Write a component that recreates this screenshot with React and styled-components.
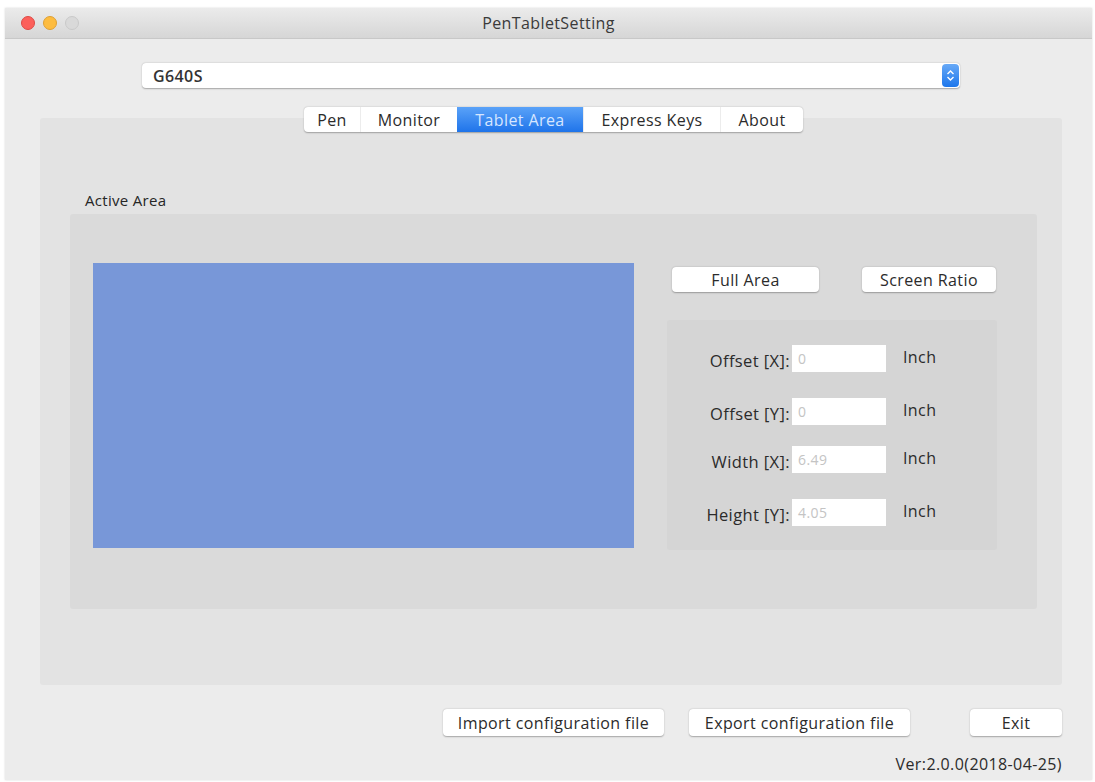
import React from 'react';
import styled, { createGlobalStyle } from 'styled-components';

const Global = createGlobalStyle`
  html, body {
    margin: 0;
    background: #ffffff;
  }
  body {
    font-family: "Open Sans", "Liberation Sans", Arial, sans-serif;
    letter-spacing: 0.4px;
    color: #2b2b2b;
  }
`;

const Window = styled.div`
  margin: 8px 3px 2px 5px;
  height: 772px;
  display: flex;
  flex-direction: column;
  background: #ececec;
  box-shadow: 0 0 2px rgba(0, 0, 0, 0.15);
`;

const TitleBar = styled.div`
  height: 30px;
  flex: 0 0 30px;
  display: flex;
  align-items: center;
  position: relative;
  background: linear-gradient(#ebebeb, #d6d6d6);
  border-bottom: 1px solid #c8c8c8;
`;

const Lights = styled.div`
  display: flex;
  gap: 8px;
  padding-left: 16px;
`;

const Light = styled.span`
  width: 14px;
  height: 14px;
  border-radius: 50%;
  background: ${p => p.color};
  border: 1px solid ${p => p.edge};
  box-sizing: border-box;
`;

const Title = styled.div`
  position: absolute;
  left: 0;
  right: 0;
  text-align: center;
  font-size: 16px;
  color: #3a3a3a;
`;

const Body = styled.div`
  flex: 1;
  display: flex;
  flex-direction: column;
  padding: 24px 0 0 35px;
`;

const Select = styled.div`
  margin-left: 102px;
  width: 818px;
  height: 25px;
  display: flex;
  align-items: center;
  justify-content: space-between;
  background: #ffffff;
  border-radius: 4px;
  box-shadow: 0 0.5px 1.5px rgba(0, 0, 0, 0.3);
  font-size: 16px;
  font-weight: 600;
  color: #333;
  padding-left: 11px;
  box-sizing: border-box;
`;

const Stepper = styled.div`
  width: 17px;
  height: 23px;
  margin-right: 1px;
  border-radius: 4px;
  background: linear-gradient(#67a9f7, #1d77ec);
  display: flex;
  align-items: center;
  justify-content: center;
`;

const Tabs = styled.div`
  display: flex;
  align-self: flex-start;
  margin: 19px 0 -14px 264px;
  height: 25px;
  background: #ffffff;
  border-radius: 4px;
  box-shadow: 0 0.5px 1.5px rgba(0, 0, 0, 0.3);
  position: relative;
  z-index: 1;
`;

const Tab = styled.div`
  width: ${p => p.w}px;
  display: flex;
  align-items: center;
  justify-content: center;
  font-size: 16px;
  color: ${p => (p.active ? '#d6e6ff' : '#2b2b2b')};
  background: ${p => (p.active ? 'linear-gradient(#5aa2f8, #1f74ea)' : 'transparent')};
  border-left: ${p => (p.first || p.active ? 'none' : '1px solid #ececec')};
  box-sizing: border-box;
`;

const Panel = styled.div`
  width: 1022px;
  height: 567px;
  background: #e3e3e3;
  border-radius: 3px;
  padding: 72px 25px 0 30px;
  box-sizing: border-box;
`;

const GroupLabel = styled.div`
  font-size: 15px;
  margin: 0 0 4px 15px;
  color: #262626;
  letter-spacing: 0.3px;
`;

const Group = styled.div`
  height: 395px;
  background: #dadada;
  border-radius: 3px;
  display: flex;
  padding: 49px 0 0 23px;
  box-sizing: border-box;
`;

const AreaPreview = styled.div`
  width: 541px;
  height: 285px;
  background: #7897d8;
`;

const Side = styled.div`
  margin-left: 33px;
  width: 330px;
  display: flex;
  flex-direction: column;
`;

const ButtonRow = styled.div`
  display: flex;
  justify-content: space-between;
  padding: 4px 1px 0 5px;
`;

const Button = styled.button`
  width: ${p => p.w}px;
  height: ${p => p.h || 25}px;
  flex: 0 0 auto;
  margin-left: ${p => p.push || 0}px;
  border: none;
  border-radius: 4px;
  background: #ffffff;
  box-shadow: 0 0.5px 1.5px rgba(0, 0, 0, 0.3);
  font-family: inherit;
  letter-spacing: inherit;
  font-size: 16px;
  color: #2b2b2b;
  padding: 0;
`;

const Fields = styled.div`
  margin-top: 28px;
  height: 230px;
  background: #d5d5d5;
  border-radius: 3px;
  padding-top: 24px;
  box-sizing: border-box;
  display: flex;
  flex-direction: column;
`;

const FieldRow = styled.div`
  display: grid;
  grid-template-columns: 125px 94px auto;
  align-items: center;
  height: 27px;
  margin-bottom: ${p => p.gap}px;
`;

const Label = styled.span`
  text-align: right;
  padding-right: 2px;
  font-size: 16.5px;
  color: #2b2b2b;
  white-space: nowrap;
  margin-top: ${p => p.shift || 0}px;
`;

const Input = styled.div`
  height: 27px;
  background: #ffffff;
  font-size: 14px;
  color: #c4c4c4;
  display: flex;
  align-items: center;
  padding-left: 6px;
  box-sizing: border-box;
`;

const Unit = styled.span`
  padding-left: 17px;
  font-size: 16px;
  color: #2b2b2b;
  margin-top: -3px;
`;

const Footer = styled.div`
  display: flex;
  padding: 24px 0 0 403px;
  align-items: center;
`;

const Version = styled.div`
  align-self: flex-end;
  margin: 17px 30px 0 0;
  font-size: 16px;
  color: #2b2b2b;
`;

const rows = [
  { label: 'Offset [X]:', value: '0', gap: 26, shift: 5 },
  { label: 'Offset [Y]:', value: '0', gap: 22, shift: 5 },
  { label: 'Width [X]:', value: '6.49', gap: 25, shift: 4 },
  { label: 'Height [Y]:', value: '4.05', gap: 0, shift: 5 },
];

const tabs = [
  { name: 'Pen', w: 56 },
  { name: 'Monitor', w: 97 },
  { name: 'Tablet Area', w: 126, active: true },
  { name: 'Express Keys', w: 137 },
  { name: 'About', w: 83 },
];

export default function App() {
  return (
    <>
      <Global />
      <Window>
        <TitleBar>
          <Lights>
            <Light color="#fc605b" edge="#de4a45" />
            <Light color="#fdbc40" edge="#dea033" />
            <Light color="#d9d9d9" edge="#c9c9c9" />
          </Lights>
          <Title>PenTabletSetting</Title>
        </TitleBar>
        <Body>
          <Select>
            <span>G640S</span>
            <Stepper>
              <svg width="9" height="13" viewBox="0 0 9 13">
                <path d="M1.5 5 L4.5 2 L7.5 5 M1.5 8 L4.5 11 L7.5 8" fill="none" stroke="#fff" strokeWidth="1.4" />
              </svg>
            </Stepper>
          </Select>
          <Tabs>
            {tabs.map((t, i) => (
              <Tab key={t.name} w={t.w} active={t.active} first={i === 0}>
                {t.name}
              </Tab>
            ))}
          </Tabs>
          <Panel>
            <GroupLabel>Active Area</GroupLabel>
            <Group>
              <AreaPreview />
              <Side>
                <ButtonRow>
                  <Button w={147}>Full Area</Button>
                  <Button w={134}>Screen Ratio</Button>
                </ButtonRow>
                <Fields>
                  {rows.map(r => (
                    <FieldRow key={r.label} gap={r.gap}>
                      <Label shift={r.shift}>{r.label}</Label>
                      <Input>{r.value}</Input>
                      <Unit>Inch</Unit>
                    </FieldRow>
                  ))}
                </Fields>
              </Side>
            </Group>
          </Panel>
          <Footer>
            <Button w={221} h={27}>Import configuration file</Button>
            <Button w={221} h={27} push={25}>Export configuration file</Button>
            <Button w={92} h={27} push={60}>Exit</Button>
          </Footer>
          <Version>Ver:2.0.0(2018-04-25)</Version>
        </Body>
      </Window>
    </>
  );
}
